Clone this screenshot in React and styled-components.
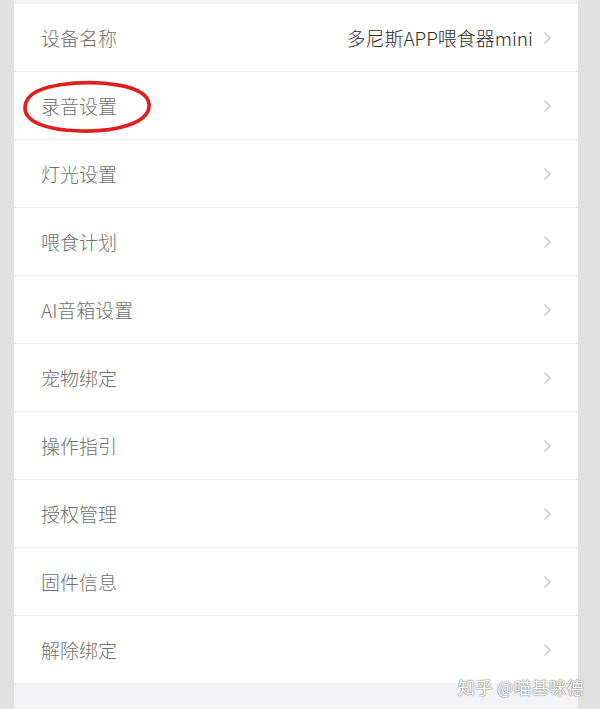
import React from 'react';
import styled, { createGlobalStyle } from 'styled-components';

const Global = createGlobalStyle`
  body {
    margin: 0;
    background: #e1e1e1;
    font-family: "Noto Sans CJK SC", "Noto Sans", sans-serif;
  }
`;

const Page = styled.div`
  position: relative;
  width: 600px;
  height: 709px;
  overflow: hidden;
  background: #e1e1e1;
`;

const Sheet = styled.div`
  margin: 0 22px 0 14px;
  height: 709px;
  background: #f3f3f5;
  padding-top: 4px;
  box-sizing: border-box;
  display: flex;
  flex-direction: column;
`;

const List = styled.div`
  background: #fff;
  display: flex;
  flex-direction: column;
`;

const Row = styled.div`
  height: 67px;
  border-bottom: 1px solid #eeeeee;
  display: flex;
  align-items: center;
  padding: 0 26px 0 27px;
`;

const Label = styled.span`
  font-size: 19px;
  font-weight: 300;
  color: #6f6f6f;
  flex: 1;
`;

const Value = styled.span`
  font-size: 19px;
  font-weight: 300;
  color: #2a2a2a;
  margin-right: 10px;
`;

const Chevron = styled.svg`
  width: 9px;
  height: 14px;
  flex-shrink: 0;
`;

const Circle = styled.svg`
  position: absolute;
  left: 20px;
  top: 79px;
  width: 134px;
  height: 56px;
  pointer-events: none;
`;

const Watermark = styled.div`
  position: absolute;
  left: 458px;
  top: 674px;
  font-size: 17px;
  color: #fff;
  letter-spacing: 0.5px;
  text-shadow: 0 0 1px #888, 0 0 1px #888, 0 0 2px #aaa;
`;

const items = [
  { label: '设备名称', value: '多尼斯APP喂食器mini' },
  { label: '录音设置' },
  { label: '灯光设置' },
  { label: '喂食计划' },
  { label: 'AI音箱设置' },
  { label: '宠物绑定' },
  { label: '操作指引' },
  { label: '授权管理' },
  { label: '固件信息' },
  { label: '解除绑定' },
];

export default function App() {
  return (
    <Page>
      <Global />
      <Sheet>
        <List>
          {items.map((it) => (
            <Row key={it.label}>
              <Label>{it.label}</Label>
              {it.value && <Value>{it.value}</Value>}
              <Chevron viewBox="0 0 9 14">
                <path d="M1.5 1.5 L7 7 L1.5 12.5" fill="none" stroke="#c4c4c4" strokeWidth="1.4" />
              </Chevron>
            </Row>
          ))}
        </List>
      </Sheet>
      <Circle viewBox="0 0 134 56">
        <path
          d="M38 6 C80 0 127 6 129 25 C131 44 96 53 60 52 C24 51 4 42 5 28 C6 14 22 8 46 5"
          fill="none"
          stroke="#e0201c"
          strokeWidth="3.6"
          strokeLinecap="round"
        />
      </Circle>
      <Watermark>知乎 @喵基咪德</Watermark>
    </Page>
  );
}
